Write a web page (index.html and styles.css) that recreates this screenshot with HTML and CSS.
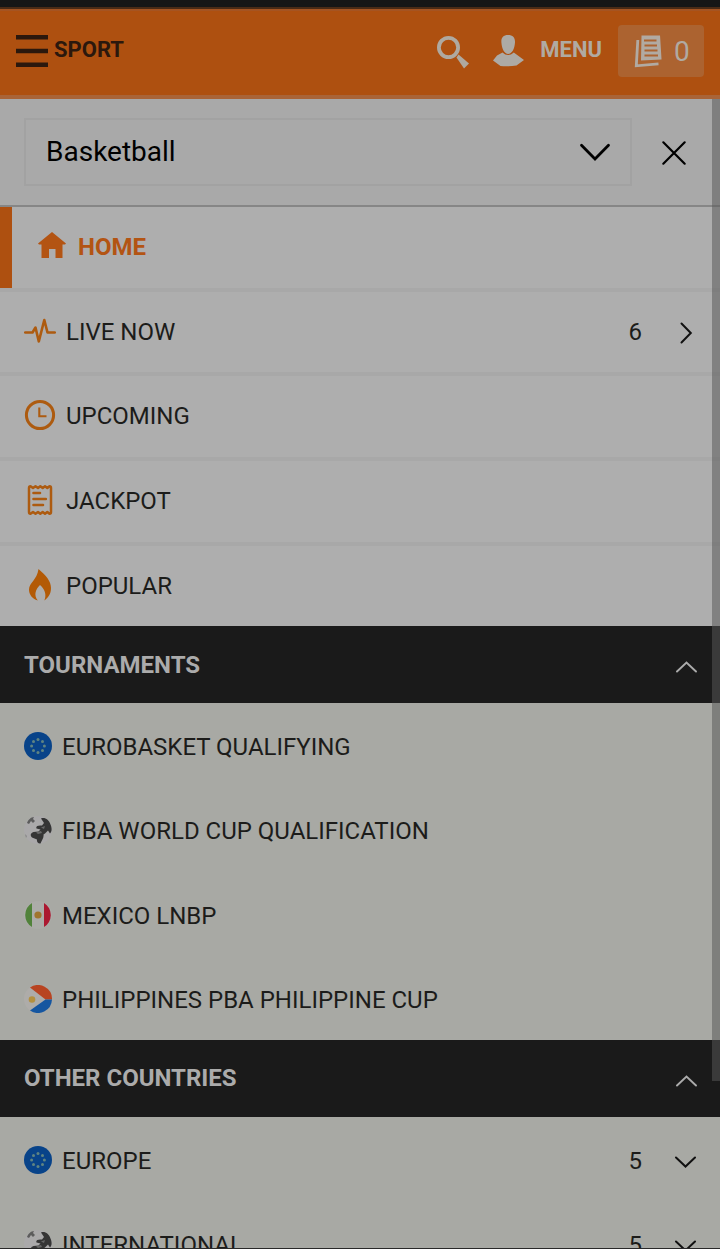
FILE: index.html
```html
<!DOCTYPE html>
<html lang="en">
<head>
    <meta charset="UTF-8">
    <meta name="viewport" content="width=device-width, initial-scale=1.0">
    <title>Basketball</title>
    <link rel="stylesheet" href="styles.css">
</head>
<body>
    <!-- Shared flag and chevron shapes -->
    <svg class="symbols">
        <symbol id="flag-eu" viewBox="0 0 28 28">
            <circle cx="14" cy="14" r="14" fill="#084389"/>
            <g fill="#5f8482">
                <circle cx="14" cy="7.6" r="1.5"/><circle cx="18.500" cy="9.500" r="1.5"/>
                <circle cx="20.400" cy="14" r="1.5"/><circle cx="18.500" cy="18.500" r="1.5"/>
                <circle cx="14" cy="20.400" r="1.5"/><circle cx="9.500" cy="18.500" r="1.5"/>
                <circle cx="7.600" cy="14" r="1.5"/><circle cx="9.500" cy="9.500" r="1.5"/>
            </g>
        </symbol>
        <symbol id="globe" viewBox="0 0 28 28">
            <circle cx="14" cy="14" r="14" fill="#aaa9aa"/>
            <path d="M3 7C4 4 7 1 10 1L9 3 11 5 9 7 7 5 5 8Z" fill="#5c5c5c"/>
            <path d="M17 2.500C21 1 25 4 26.500 8.500 28.500 13 27.500 16 26 17.500L24 14.500 21 17.500 19.500 18.500C20 22 18 24 16.500 27.500 14 28 12.500 25.500 13 23.500L8 21.500C5.500 19 7 17 9.500 16L14.500 15.500 16.500 13.500 12.500 12.500C11.500 10 14 9 18 9.500L20 7Z" fill="#353535"/>
            <path d="M12 16.500L17 15 18 17 14 18ZM17 11.500L21 10 20 13Z" fill="#686868"/>
            <path d="M1 18L3 20 2 22Z" fill="#858585"/>
        </symbol>
        <symbol id="chevron-down" viewBox="0 0 22 12">
            <path d="M2 1.500L11.500 10.500 21 1.500" fill="none" stroke="currentColor" stroke-width="2" stroke-linecap="round"/>
        </symbol>
        <symbol id="chevron-up" viewBox="0 0 22 12">
            <path d="M2 10.500L11.500 1.500 21 10.500" fill="none" stroke="currentColor" stroke-width="1.900" stroke-linecap="round"/>
        </symbol>
    </svg>

    <div class="page">
        <div class="status-strip"></div>

        <header class="header">
            <a class="sport-link">
                <svg width="32" height="32" viewBox="0 0 32 32" fill="#2b180d">
                    <path d="M0 0h32v4.500H0zM0 13.800h32v4.500H0zM0 27.500h32v4.500H0z"/>
                </svg>
                <span>SPORT</span>
            </a>
            <div class="header-right">
                <svg class="search-icon" width="33" height="33" viewBox="0 0 33 33">
                    <circle cx="12.500" cy="11.500" r="9.600" fill="none" stroke="#afa9a0" stroke-width="3.800"/>
                    <path d="M22.500 18.500L33 27.500 28 32.500 20.500 21.500Z" fill="#afa9a0"/>
                </svg>
                <svg class="user-icon" width="32" height="32" viewBox="0 0 32 32" fill="#adaaa5">
                    <path d="M16 0C21 0 23.300 3 23 7.500 22.600 14 19.800 19 16.200 19S9.800 14 9.400 7.500C9 3 11 0 16 0Z"/>
                    <path d="M10.500 17.500Q16 22.500 21.800 17.500L32 25 24.500 30.500Q16 31.800 8.500 31L1 25.500 5 20.500Z"/>
                </svg>
                <span class="menu-label">MENU</span>
                <a class="betslip">
                    <svg width="29" height="33" viewBox="0 0 29 33">
                        <path d="M7.500 .500H26L27.500 24.500 7 25.500Z" fill="#b1aaa2"/>
                        <path d="M10 5.500H22.500M10.500 10.500H23M10.500 15.500H23.500M10.500 20.500H24" stroke="#ac6330" stroke-width="1.800"/>
                        <path d="M3.800 5L2.300 30.800 24.500 28.800" fill="none" stroke="#b1aaa2" stroke-width="2.800"/>
                    </svg>
                    <span>0</span>
                </a>
            </div>
        </header>

        <div class="picker">
            <div class="select">
                <span>Basketball</span>
                <svg width="32" height="18" viewBox="0 0 32 18">
                    <path d="M2.500 2.300L16 16 29.500 2.300" fill="none" stroke="#000" stroke-width="2.800" stroke-linecap="round"/>
                </svg>
            </div>
            <svg class="close" width="26" height="26" viewBox="0 0 26 26">
                <path d="M2.300 2.300L23.700 23.700M23.700 2.300L2.300 23.700" stroke="#000" stroke-width="2.200" stroke-linecap="round"/>
            </svg>
        </div>

        <nav class="menu">
            <a class="menu-item active">
                <svg width="28" height="27" viewBox="0 0 28 27" fill="#b35413">
                    <path d="M14 0L28 11.500 27 12.500H24.500V26H17.500V17H11V26H3.500V12.500H1L0 11.500Z"/>
                </svg>
                <span>HOME</span>
            </a>
            <a class="menu-item">
                <svg width="32" height="26" viewBox="0 0 32 26">
                    <path d="M1.200 14.500H8.500L11.500 9.500 14.800 23.500 20.300 2 23.500 14.500H30.800" fill="none" stroke="#ad5b10" stroke-width="2.600" stroke-linecap="round" stroke-linejoin="round"/>
                </svg>
                <span>LIVE NOW</span>
                <span class="count">6</span>
                <svg class="arrow" width="22" height="22" viewBox="0 0 22 22">
                    <path d="M7.500 1.500L16.800 11 7.500 20.500" fill="none" stroke="#111" stroke-width="2" stroke-linecap="round"/>
                </svg>
            </a>
            <a class="menu-item upcoming">
                <svg width="32" height="32" viewBox="0 0 32 32" fill="none" stroke="#ad5b10">
                    <circle cx="16" cy="16" r="13.600" stroke-width="3"/>
                    <path d="M15.300 8.500V17.200H22.500" stroke-width="2.100"/>
                </svg>
                <span>UPCOMING</span>
            </a>
            <a class="menu-item">
                <svg width="32" height="32" viewBox="0 0 32 32" fill="none" stroke="#ad5b10" stroke-linecap="round" stroke-linejoin="round">
                    <path d="M6.500 2.200L9 4 11.500 2.200 14 4 16.300 2.200 18.700 4 21 2.200 23.300 4 25.500 2.200Q27 2.200 27 4V28Q27 29.800 25.500 29.800L23.300 28 21 29.800 18.700 28 16.300 29.800 14 28 11.500 29.800 9 28 6.500 29.800Q5 29.800 5 28V4Q5 2.200 6.500 2.200Z" stroke-width="2.500"/>
                    <path d="M9.500 9H16M9.500 15H21.800M9.500 21H19" stroke-width="2.600"/>
                </svg>
                <span>JACKPOT</span>
            </a>
            <a class="menu-item">
                <svg width="32" height="32" viewBox="0 0 32 32">
                    <path d="M14.500 0C22 6.500 27 12 27 19 27 25 24 29 20.300 31.500 23 26 20.500 19.500 16 16 11.500 20.500 9.500 26 13.800 31.500 8 30 5 25 5 20.500 5 14 13 11 14.500 0Z" fill="#b35a06"/>
                </svg>
                <span>POPULAR</span>
            </a>
        </nav>

        <div class="section-title tournaments">
            <span>TOURNAMENTS</span>
            <svg class="arrow" width="22" height="12"><use href="#chevron-up"/></svg>
        </div>
        <div class="league-list">
            <a class="league">
                <svg class="flag" width="28" height="28"><use href="#flag-eu"/></svg>
                <span>EUROBASKET QUALIFYING</span>
            </a>
            <a class="league">
                <svg class="flag" width="28" height="28"><use href="#globe"/></svg>
                <span>FIBA WORLD CUP QUALIFICATION</span>
            </a>
            <a class="league">
                <svg class="flag" width="28" height="28" viewBox="0 0 28 28">
                    <circle cx="14" cy="14" r="14" fill="#acaca9"/>
                    <path d="M8 2V26A14 14 0 0 1 8 2Z" fill="#51823a"/>
                    <path d="M20 2V26A14 14 0 0 0 20 2Z" fill="#ab1830"/>
                    <circle cx="14" cy="14" r="3.600" fill="#a0752d"/>
                </svg>
                <span>MEXICO LNBP</span>
            </a>
            <a class="league">
                <svg class="flag" width="28" height="28" viewBox="0 0 28 28">
                    <circle cx="14" cy="14" r="14" fill="#aeaca9"/>
                    <path d="M6 2.600A14 14 0 0 1 28 14.500H21.500Z" fill="#b84421"/>
                    <path d="M6 25.400A14 14 0 0 0 28 14.500H21.500Z" fill="#1556a0"/>
                    <circle cx="8" cy="14.500" r="3.300" fill="#b3903f"/>
                </svg>
                <span>PHILIPPINES PBA PHILIPPINE CUP</span>
            </a>
        </div>

        <div class="section-title">
            <span>OTHER COUNTRIES</span>
            <svg class="arrow" width="22" height="12"><use href="#chevron-up"/></svg>
        </div>
        <div class="league-list">
            <a class="league">
                <svg class="flag" width="28" height="28"><use href="#flag-eu"/></svg>
                <span>EUROPE</span>
                <span class="count">5</span>
                <svg class="arrow" width="22" height="12"><use href="#chevron-down"/></svg>
            </a>
            <a class="league">
                <svg class="flag" width="28" height="28"><use href="#globe"/></svg>
                <span>INTERNATIONAL</span>
                <span class="count">5</span>
                <svg class="arrow" width="22" height="12"><use href="#chevron-down"/></svg>
            </a>
        </div>

        <div class="scrollbar"></div>
    </div>
</body>
</html>
```
FILE: styles.css
```css
* {
    box-sizing: border-box;
}

body {
    margin: 0;
    font-family: Roboto, sans-serif;
    font-size: 24px;
    color: #1c1c1a;
    background-color: #a8a9a4;
}

.symbols {
    display: none;
}

.page {
    position: relative;
    height: 1249px;
    overflow: hidden;
    border-bottom: 1px solid #292929;
}

svg {
    display: block;
    flex-shrink: 0;
}

.status-strip {
    height: 9px;
    background-color: #161616;
    border-bottom: 2px solid #4a2b16;
}

/* Top bar */
.header {
    display: flex;
    justify-content: space-between;
    align-items: center;
    height: 90px;
    padding: 0 16px 4px;
    background-color: #ae5010;
    border-top: 2px solid #a55422;
    border-bottom: 4px solid #a96438;
}

.sport-link {
    display: flex;
    align-items: center;
    gap: 6px;
    color: #2b180d;
    font-size: 22px;
    font-weight: bold;
}

.sport-link span,
.menu-label {
    margin-top: -4px;
}

.header-right {
    display: flex;
    align-items: center;
    color: #b0aaa2;
}

.search-icon {
    margin: 3px 23px 0 0;
}

.user-icon {
    margin-right: 16px;
}

.menu-label {
    margin-right: 16px;
    font-size: 22px;
    font-weight: bold;
}

.betslip {
    display: flex;
    align-items: center;
    gap: 11px;
    width: 86px;
    height: 52px;
    padding-left: 16px;
    border-radius: 4px;
    background-color: #ac6330;
    font-size: 28px;
}

/* Sport picker */
.picker {
    display: flex;
    align-items: center;
    gap: 29px;
    height: 108px;
    padding: 0 24px;
    background-color: #a9a9a9;
    border-bottom: 2px solid #868686;
}

.select {
    display: flex;
    justify-content: space-between;
    align-items: center;
    width: 608px;
    height: 68px;
    padding: 0 19px 2px 20px;
    border: 2px solid #a2a2a2;
    color: #000;
    font-size: 28px;
}

.select svg {
    margin-top: 2px;
}

.close {
    margin-top: 2px;
}

/* Main links */
.menu-item {
    display: flex;
    align-items: center;
    gap: 10px;
    height: 84.7px;
    padding: 0 24px;
    background-color: #aeaeae;
    border-bottom: 4px solid #a8a8a8;
}

.menu-item:last-child {
    height: 80.2px;
    border-bottom: none;
}

.menu-item.active {
    gap: 12px;
    padding-left: 38px;
    box-shadow: inset 12px 0 #ae5010;
    color: #b35413;
    font-weight: bold;
}

.menu-item svg {
    margin-top: -2px;
}

.menu-item.active svg {
    margin-top: -3px;
}

.menu-item.upcoming {
    padding-bottom: 2px;
}

.count {
    margin-left: auto;
}

.count + .arrow {
    margin-left: 22px;
}

.menu-item .arrow {
    margin-top: 2px;
}

/* Section headings */
.section-title {
    display: flex;
    justify-content: space-between;
    align-items: center;
    height: 77px;
    padding: 0 23px 0 24px;
    background-color: #1a1a1a;
    color: #ababab;
    font-weight: bold;
}

.section-title.tournaments {
    padding-top: 1px;
}

.section-title .arrow {
    margin-top: 5px;
}

.league-list {
    background-color: #a8a9a4;
}

.league {
    display: flex;
    align-items: center;
    gap: 10px;
    height: 84.25px;
    padding: 4px 24px 0;
}

.league .flag {
    margin-top: -2px;
}

.league .arrow {
    margin-top: 2px;
    color: #111;
}

.scrollbar {
    position: absolute;
    top: 99px;
    right: 0;
    width: 8px;
    height: 982px;
    background-color: rgba(88, 88, 88, 0.52);
}
```
